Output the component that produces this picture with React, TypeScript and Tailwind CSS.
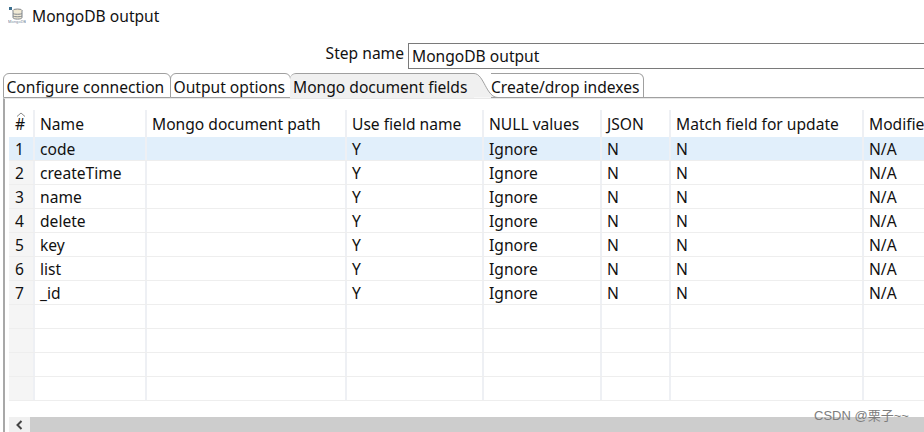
const font = { fontFamily: '"Noto Sans", "Noto Sans CJK SC", sans-serif' };

const columns = [
  { label: "Name", w: "w-[112px]" },
  { label: "Mongo document path", w: "w-[200px]" },
  { label: "Use field name", w: "w-[137px]" },
  { label: "NULL values", w: "w-[118px]" },
  { label: "JSON", w: "w-[69px]" },
  { label: "Match field for update", w: "w-[193px]" },
  { label: "Modified", w: "w-[80px]" },
];

const data: string[][] = [
  ["code", "", "Y", "Ignore", "N", "N", "N/A"],
  ["createTime", "", "Y", "Ignore", "N", "N", "N/A"],
  ["name", "", "Y", "Ignore", "N", "N", "N/A"],
  ["delete", "", "Y", "Ignore", "N", "N", "N/A"],
  ["key", "", "Y", "Ignore", "N", "N", "N/A"],
  ["list", "", "Y", "Ignore", "N", "N", "N/A"],
  ["_id", "", "Y", "Ignore", "N", "N", "N/A"],
  ["", "", "", "", "", "", ""],
  ["", "", "", "", "", "", ""],
  ["", "", "", "", "", "", ""],
  ["", "", "", "", "", "", ""],
];

function Row({ index, cells, selected }: { index: number; cells: string[]; selected: boolean }) {
  return (
    <div className={`flex h-[24px] shrink-0 border-b border-[#eeeeee] ${selected ? "bg-[#e1effb]" : "bg-white"}`}>
      <div className={`w-[26px] shrink-0 border-r-2 border-[#eef0f4] pl-[6px] leading-[24px] ${selected ? "bg-[#e1effb]" : "bg-[#f5f5f5]"}`}>
        {index <= 7 ? index : ""}
      </div>
      {cells.map((c, i) => (
        <div key={i} className={`${columns[i].w} shrink-0 border-r-2 border-[#eef0f4] pl-[5px] leading-[24px] whitespace-nowrap`}>
          {c}
        </div>
      ))}
    </div>
  );
}

function Tab({ label, w, active }: { label: string; w: string; active?: boolean }) {
  return (
    <div
      className={`${w} h-[25px] shrink-0 leading-[26px] whitespace-nowrap ${
        active
          ? "bg-[#f0f0f0] border-t border-[#a0a0a0] rounded-tl-[6px] pl-[3px]"
          : "bg-white border border-[#a0a0a0] rounded-t-[6px] -mr-px pl-[2.5px]"
      }`}
    >
      {label}
    </div>
  );
}

export default function App() {
  return (
    <div className="relative w-[924px] h-[432px] overflow-hidden bg-white text-[15.6px] text-[#111111]" style={font}>
      <div className="flex items-center h-[32px] pl-[8px] gap-[6px]">
        <svg width="18" height="24" viewBox="0 0 18 24">
          <rect x="1" y="3" width="3" height="3" fill="#3b6f8f" />
          <ellipse cx="9.5" cy="6.5" rx="4.5" ry="1.5" fill="#efe6cc" stroke="#7f858c" />
          <path d="M5 6.5v7c0 1 2 1.6 4.5 1.6s4.5-.6 4.5-1.6v-7" fill="#f1ead6" stroke="#7f858c" />
          <path d="M5 9.5c1 1 8 1 9 0M5 12c1 1 8 1 9 0" fill="none" stroke="#7f858c" />
          <text x="0" y="19" fontSize="3.8" textLength="18" lengthAdjust="spacingAndGlyphs" fill="#6f8296">MongoDB</text>
        </svg>
        <span className="leading-[30px] pb-[1px]">MongoDB output</span>
      </div>

      <div className="flex items-start h-[41px] pt-[11px]">
        <div className="w-[408px] shrink-0 pr-[4px] text-right leading-[20px]">Step name</div>
        <div className="flex-1 h-[26px] border border-r-0 border-[#7a7a7a] pl-[3px] leading-[24px]">MongoDB output</div>
      </div>

      <div className="relative flex pl-[3px] h-[25px]">
        <Tab label="Configure connection" w="w-[168px]" />
        <Tab label="Output options" w="w-[121px]" />
        <Tab label="Mongo document fields" w="w-[184px]" active />
        <svg width="24" height="25" viewBox="0 0 24 25" className="shrink-0 -mr-[7px]">
          <path d="M0 0.5C10 0.5 12 24.5 24 24.5L0 24.5Z" fill="#f0f0f0" />
          <path d="M0 0.5C10 0.5 12 24.5 24 24.5" fill="none" stroke="#a0a0a0" />
        </svg>
        <div className="w-[153px] h-[25px] shrink-0 border-t border-r border-b border-[#a0a0a0] rounded-tr-[6px] leading-[26px] whitespace-nowrap">
          Create/drop indexes
        </div>
        <div className="flex-1 border-b border-[#a0a0a0]" />
      </div>

      <div className="h-[334px] ml-[3px] border-l-2 border-[#a8a8a8] border-t border-t-[#e8e8e8] pl-[4px] pt-[11px] flex flex-col">
        <div className="flex h-[27px] shrink-0">
          <div className="relative w-[26px] shrink-0 border-r-2 border-[#eef0f4] pl-[6px] leading-[28px]">
            #
            <svg width="10" height="5" viewBox="0 0 10 5" className="absolute left-[7px] top-[2px]">
              <path d="M1 4.5L5 1l4 3.5" fill="none" stroke="#8a8a8a" />
            </svg>
          </div>
          {columns.map((c) => (
            <div key={c.label} className={`${c.w} shrink-0 border-r-2 border-[#eef0f4] pl-[5px] leading-[28px] whitespace-nowrap`}>
              {c.label}
            </div>
          ))}
        </div>
        <div className="flex-1 overflow-hidden">
          {data.map((cells, i) => (
            <Row key={i} index={i + 1} cells={cells} selected={i === 0} />
          ))}
        </div>
        <div className="flex h-[15px] shrink-0 bg-[#cdcdcd]">
          <div className="w-[21px] bg-[#f0f0f0] flex items-center justify-center">
            <svg width="9" height="10" viewBox="0 0 9 10">
              <path d="M6.5 1L2.5 5l4 4" fill="none" stroke="#444" strokeWidth="2" />
            </svg>
          </div>
        </div>
      </div>

      <div className="absolute left-[814px] top-[407px] text-[13px] leading-[18px] text-[#7d7d7d] whitespace-nowrap" style={{ fontFamily: '"Liberation Sans", "Noto Sans CJK SC", sans-serif' }}>
        CSDN @栗子~~
      </div>
    </div>
  );
}
